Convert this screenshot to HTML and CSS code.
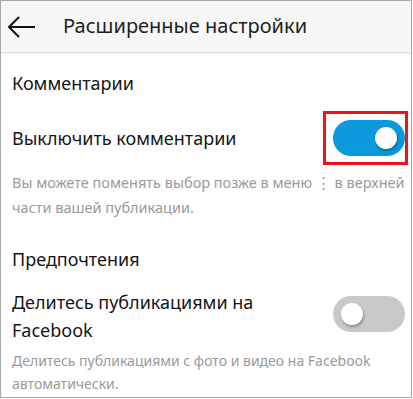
FILE: index.html
```html
<!DOCTYPE html>
<html lang="ru">
<head>
  <meta charset="utf-8">
  <title>Расширенные настройки</title>
  <link rel="stylesheet" href="styles.css">
</head>
<body>
  <div class="screen">
    <!-- шапка -->
    <div class="topbar">
      <button class="back-btn" title="Назад">
        <svg viewBox="0 0 28 24"><polyline points="12,2 2,12 12,22" /><line x1="2" y1="12" x2="28" y2="12" /></svg>
      </button>
      <div class="topbar-title">Расширенные настройки</div>
    </div>

    <div class="content">
      <div class="section-title first">Комментарии</div>
      <div class="setting-row">
        <div class="setting-label">Выключить комментарии</div>
        <div class="switch-frame marked">
          <div class="switch on"><span class="knob"></span></div>
        </div>
      </div>
      <div class="setting-desc">Вы можете поменять выбор позже в меню ⋮ в верхней части вашей публикации.</div>

      <div class="section-title">Предпочтения</div>
      <div class="setting-row two-lines">
        <div class="setting-label">Делитесь публикациями на Facebook</div>
        <div class="switch-frame">
          <div class="switch"><span class="knob"></span></div>
        </div>
      </div>
      <div class="setting-desc small">Делитесь публикациями с фото и видео на Facebook автоматически.</div>
    </div>
  </div>
</body>
</html>
```

FILE: styles.css
```css
html, body {
  margin: 0; padding: 0;
  background: #fff;
  font-family: 'Noto Sans', 'Open Sans', Arial, sans-serif;
}
.screen {
  width: 412px; height: 398px;
  border: 1px solid #a8a8a8;
  box-sizing: border-box;
  background: #fff;
  overflow: hidden;
}
.topbar {
  height: 52px;
  background: #f7f7f7;
  border-bottom: 1px solid #dcdcdc;
  box-shadow: 0 2px 3px #0000000d;
  display: flex; align-items: center;
  box-sizing: border-box;
}
.back-btn {
  width: 28px; height: 24px;
  margin: 0 28px 0 6px;
  padding: 0; border: none; background: none;
  display: flex; align-items: center; justify-content: center;
}
.back-btn svg {
  width: 28px; height: 24px; display: block;
  fill: none;
  stroke: #111;
  stroke-width: 2;
}
.topbar-title {
  font-size: 20px;
  color: #1e1e1e;
  margin-top: -2px;
}

.content {
  padding: 0 3px 0 11px;
}
.section-title {
  font-size: 18px;
  line-height: 24px;
  color: #151515;
  margin-top: 27px;
}
.section-title.first { margin-top: 18px; }
.setting-row {
  display: flex; align-items: center; justify-content: space-between;
  margin-top: 16px;
  min-height: 54px;
}
.setting-row.two-lines { margin-top: 17px; }
.setting-row.two-lines .switch-frame { margin-top: -5px; }
.setting-label {
  font-size: 18px;
  line-height: 28px;
  color: #151515;
  max-width: 270px;
}
.switch-frame {
  border: 3px solid transparent;
  padding: 6px 0 6px 7px;
}
.switch-frame.marked { border-color: #e8151b; }
.switch {
  width: 72px; height: 36px;
  border-radius: 18px;
  background: #c9c9c9;
  position: relative;
}
.switch.on { background: #0b98dc; }
.knob {
  position: absolute;
  top: 7px; left: 8px;
  width: 22px; height: 22px;
  border-radius: 50%;
  background: #fff;
  box-shadow: 1px 2px 3px #0000004d;
}
.switch.on .knob { left: auto; right: 8px; }
.setting-desc {
  font-size: 14.5px;
  line-height: 25px;
  color: #9a9a9a;
  margin-top: 5px;
}
.setting-desc.small { font-size: 14px; line-height: 23px; margin-top: 5px; }
```
